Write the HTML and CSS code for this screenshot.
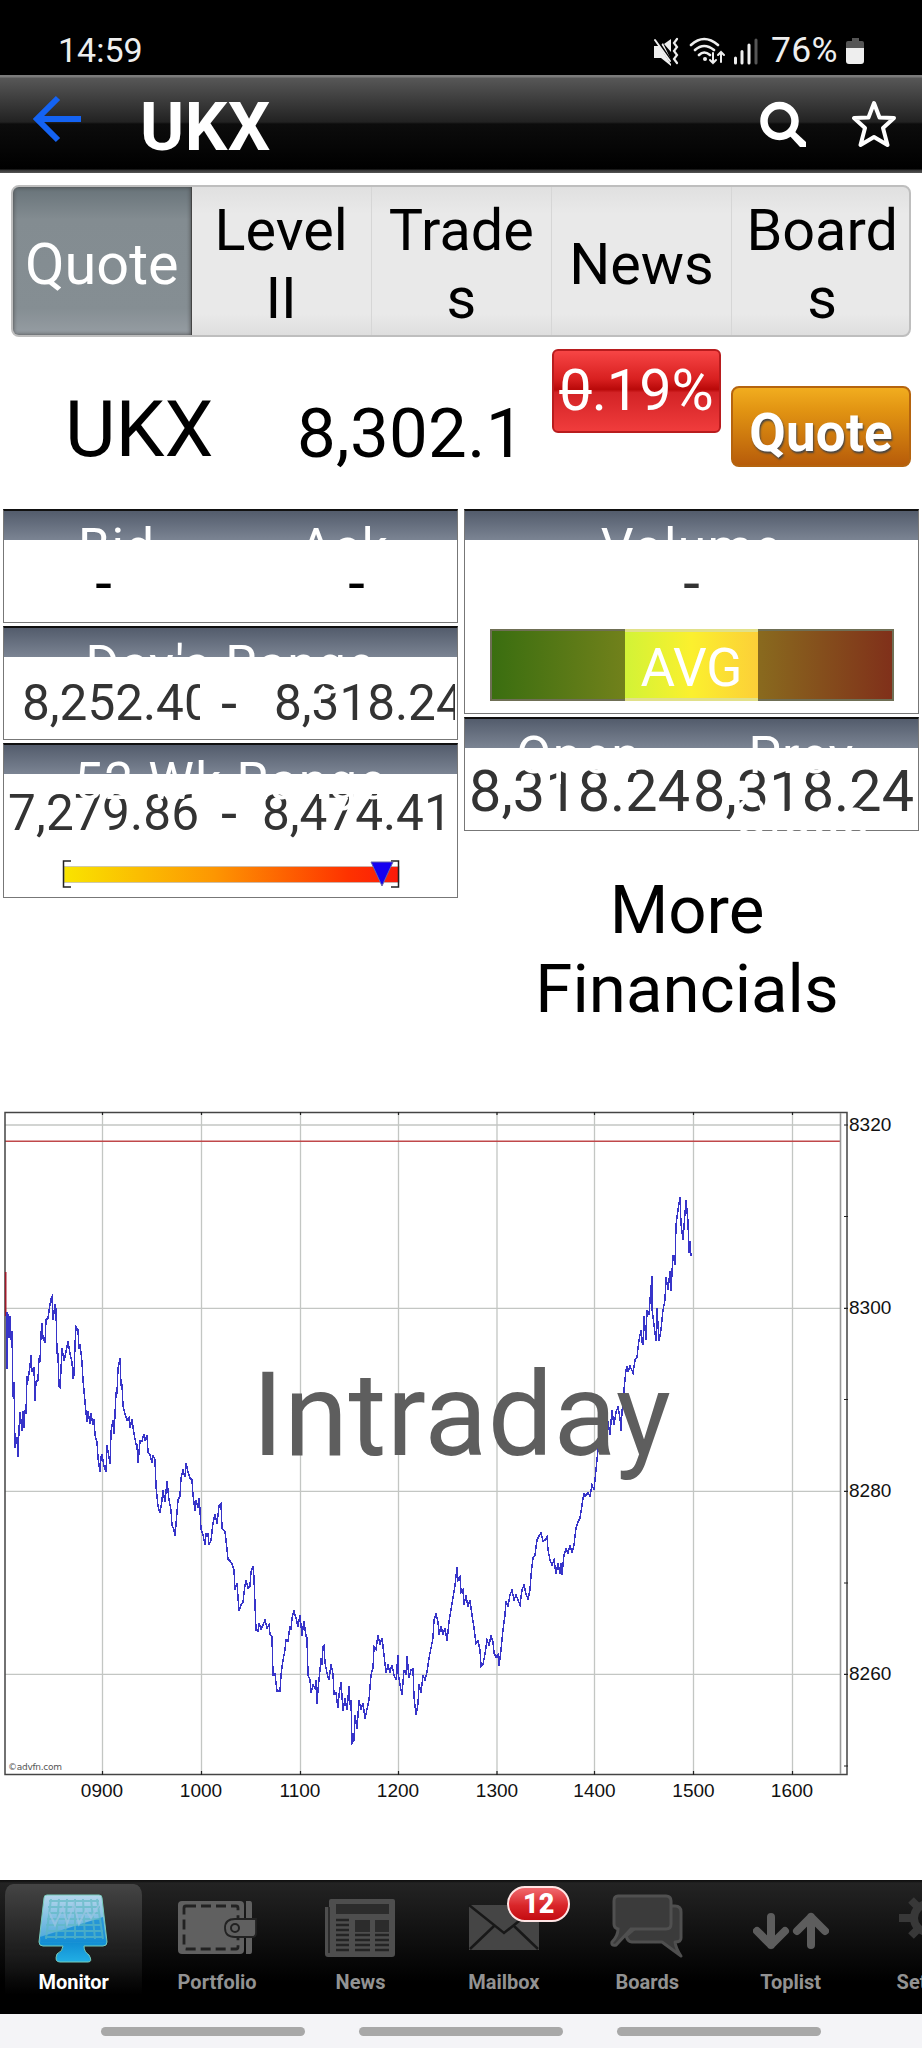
FILE: index.html
```html
<!DOCTYPE html>
<html lang="en">
<head>
<meta charset="utf-8">
<title>UKX</title>
<link rel="stylesheet" href="styles.css">
</head>
<body>
<div class="status">
  <span class="clock">14:59</span>
  <svg class="status-icons" width="120" height="32" viewBox="0 0 120 32">
    <g fill="#eee"><path d="M1 10h6l3-3 8 17v6L8 22H1z"/><path d="M18 3v13l-7-8z"/></g>
    <g fill="none" stroke="#eee" stroke-linecap="round">
      <path d="M3 3l16 24" stroke="#000" stroke-width="3"/><path d="M2 4l15 21" stroke-width="2"/>
      <path d="M24 3l-3 4 3 4-3 4 3 4-3 4 3 4" stroke-width="2.2"/>
      <path d="M38 9q13-12 27 0M42 14q9-8 19 0M46 19q5-5 11 0" stroke-width="2.6"/>
      <path d="M60 17v10m-3-3l3 3 3-3M68 26V16m-3 3l3-3 3 3" stroke-width="2"/>
    </g>
    <circle cx="52" cy="23" r="2" fill="#eee"/>
    <path d="M82.500 22v5M89 15.500v11.500M96 9v18" stroke="#eee" stroke-width="3" stroke-linecap="round"/>
    <path d="M103 4v23" stroke="#555" stroke-width="3" stroke-linecap="round"/>
  </svg>
  <span class="percent">76%</span>
  <svg class="battery" width="18" height="28" viewBox="0 0 18 28">
    <path d="M6 0h7v3h3q2 0 2 2v6H0V5q0-2 2-2h4z" fill="#555"/><path d="M0 10h18v13q0 3-3 3H3q-3 0-3-3z" fill="#eee"/>
  </svg>
</div>
<header class="titlebar">
  <svg class="back" width="50" height="52" viewBox="0 0 50 52"><path d="M26 4L5 25l21 21M5 25h44" fill="none" stroke="#1463f3" stroke-width="6"/></svg>
  <h1>UKX</h1>
  <svg width="46" height="48" viewBox="0 0 46 48"><circle cx="19.500" cy="20" r="15.500" fill="none" stroke="#fff" stroke-width="7.500"/><path d="M28 33l5-4 13 12v5h-6z" fill="#fff"/></svg>
  <svg class="star" width="44" height="48" viewBox="0 0 44 48"><path d="M22 3l5.500 14.500L42 18 31 28l4.500 17L22 37 8.500 45 13 28 2 18l14.500-.5z" fill="none" stroke="#fff" stroke-width="4" stroke-linejoin="round"/></svg>
</header>
<nav class="tabs">
  <div class="tab tab-on">Quote</div><div class="tab">Level<br>II</div><div class="tab">Trade<br>s</div><div class="tab">News</div><div class="tab">Board<br>s</div>
</nav>
<section class="summary">
  <div class="symbol">UKX</div>
  <div class="price">8,302.1</div>
  <div class="change"><span class="struck">0</span>.19%</div>
  <div class="quote-button">Quote</div>
</section>
<section class="panels">
  <div class="column">
    <div class="panel short">
      <div class="head"><span class="bid">Bid</span><span class="ask">Ask</span></div>
      <div class="values dashes"><span>-</span><span>-</span></div>
    </div>
    <div class="panel short">
      <div class="head"><span>Day's Range</span></div>
      <div class="values range day"><span class="low">8,252.40</span><span class="mid">-</span><span class="high">8,318.24</span></div>
    </div>
    <div class="panel year-panel">
      <div class="head"><span>52 Wk Range</span></div>
      <div class="values range year"><span class="low">7,279.86</span><span class="mid">-</span><span class="high">8,474.41</span></div>
      <svg class="gauge" width="340" height="30" viewBox="0 0 340 30">
        <defs><linearGradient id="heat"><stop offset="0" stop-color="#f9e400"/><stop offset=".45" stop-color="#fd9602"/><stop offset=".85" stop-color="#fe3200"/><stop offset="1" stop-color="#fc1a09"/></linearGradient></defs>
        <rect x="2" y="7.500" width="335" height="16" fill="url(#heat)" stroke="#bbb" stroke-width=".7"/>
        <path d="M9 2H1.500v26H9M329 2h7.500v26H329" fill="none" stroke="#222" stroke-width="1.500"/>
        <path d="M309 3h22l-11 24z" fill="#1500f0" stroke="#66a" stroke-width="1"/>
      </svg>
    </div>
  </div>
  <div class="column">
    <div class="panel volume">
      <div class="head"><span>Volume</span></div>
      <div class="values single"><span>-</span></div>
      <div class="average"><div></div><div class="avg">AVG</div><div></div></div>
    </div>
    <div class="panel short">
      <div class="head two-line"><span class="open">Open</span><span class="prev">Prev<br>Close</span></div>
      <div class="values opening"><span>8,318.24</span><span>8,318.24</span></div>
    </div>
    <div class="more">More<br>Financials</div>
  </div>
</section>
<svg class="chart" width="922" height="720" viewBox="0 1100 922 720">
  <path d="M102.500 1113V1774M201.500 1113V1774M300.500 1113V1774M398.500 1113V1774M497 1113V1774M594.500 1113V1774M693.500 1113V1774M792.500 1113V1774M5 1125H840M5 1308.300H840M5 1491.300H840M5 1674.300H840" stroke="#c3c6c3" stroke-width="1.300"/>
  <path d="M5 1141.300H840" stroke="#c0484a" stroke-width="1.500"/>
  <path d="M5 1112.600H847V1774.400H5Z" fill="none" stroke="#444" stroke-width="1.500"/>
  <path d="M840.500 1113V1774" stroke="#999" stroke-width="1.600"/>
  <path d="M844 1125h4M844 1216.500h4M844 1308.300h4M844 1399.500h4M844 1491.300h4M844 1583h4M844 1674.300h4M844 1766h4M102.500 1771v4M201.500 1771v4M300.500 1771v4M398.500 1771v4M497 1771v4M594.500 1771v4M693.500 1771v4M792.500 1771v4M102.500 1112v3M201.500 1112v3M300.500 1112v3M398.500 1112v3M497 1112v3M594.500 1112v3M693.500 1112v3M792.500 1112v3" stroke="#222" stroke-width="1.200"/>
  <path d="M5.700 1272V1316" stroke="#a01a2a" stroke-width="1.600"/>
  <polyline class="trace" points="7,1312 7,1369 8,1314 9,1338 10,1316 11,1340 12,1331 13,1397 14,1382 15,1448 17,1437 18,1457 19,1430 20,1412 22,1431 23,1411 24,1428 25,1410 26,1414 27,1376 28,1381 30,1366 31,1355 32,1372 34,1367 35,1401 36,1382 38,1380 39,1358 40,1362 41,1334 42,1323 43,1338 45,1343 46,1320 48,1318 49,1311 51,1299 52,1297 53,1320 55,1304 56,1309 57,1353 58,1354 59,1386 60,1387 61,1370 62,1348 64,1361 66,1352 68,1341 70,1354 72,1362 73,1379 74,1375 75,1345 76,1327 78,1330 79,1349 80,1344 82,1362 83,1380 85,1402 87,1422 88,1411 90,1424 91,1413 93,1425 94,1419 95,1435 97,1442 98,1458 100,1472 101,1457 102,1454 104,1466 106,1472 107,1445 109,1457 110,1464 111,1432 113,1420 114,1434 115,1415 116,1393 117,1393 118,1368 120,1358 121,1385 122,1385 123,1406 125,1414 127,1420 129,1418 130,1428 132,1419 134,1434 136,1444 137,1445 138,1463 140,1441 142,1441 144,1434 145,1441 147,1435 148,1452 150,1455 152,1463 153,1455 155,1460 156,1486 158,1506 160,1513 162,1500 163,1490 165,1502 167,1481 169,1500 171,1510 172,1525 174,1530 175,1536 177,1512 178,1500 180,1496 181,1478 183,1470 185,1477 186,1463 188,1472 190,1478 192,1480 193,1495 195,1511 196,1500 198,1508 199,1498 200,1510 201,1529 203,1535 205,1545 206,1534 208,1534 209,1545 211,1540 213,1523 215,1514 217,1524 219,1506 221,1504 222,1528 225,1532 226,1540 228,1559 230,1561 232,1564 234,1570 235,1590 237,1583 239,1611 241,1605 243,1602 245,1585 246,1580 248,1588 250,1586 251,1572 253,1566 254,1578 255,1605 256,1630 258,1631 259,1623 261,1629 263,1625 265,1620 267,1628 269,1625 270,1634 272,1637 273,1675 275,1674 277,1691 280,1691 281,1675 283,1660 285,1650 286,1640 288,1641 290,1626 291,1630 292,1618 294,1611 296,1618 298,1627 300,1615 302,1636 304,1621 306,1636 307,1638 308,1675 310,1680 311,1693 313,1685 315,1688 316,1680 317,1704 318,1690 320,1670 321,1658 322,1665 323,1647 324,1646 325,1663 327,1673 329,1680 331,1664 333,1674 334,1694 336,1693 338,1708 339,1695 341,1682 343,1711 345,1698 347,1710 349,1686 350,1705 351,1700 352,1743 354,1740 355,1715 357,1729 359,1700 361,1710 363,1703 365,1719 367,1709 369,1700 371,1675 373,1668 374,1647 376,1649 378,1635 380,1645 382,1638 384,1655 386,1673 388,1665 390,1672 392,1665 394,1675 396,1680 398,1655 398,1672 400,1685 402,1695 404,1670 406,1675 407,1656 409,1678 411,1670 413,1669 414,1697 416,1715 418,1704 419,1684 421,1693 423,1675 425,1680 427,1672 429,1658 431,1648 433,1638 434,1620 436,1614 438,1622 439,1635 441,1626 443,1635 445,1628 447,1641 449,1622 451,1610 453,1598 455,1585 457,1567 458,1580 460,1577 461,1592 463,1590 464,1605 466,1595 468,1607 470,1600 472,1615 474,1628 476,1643 478,1641 480,1650 481,1666 483,1664 485,1654 487,1640 489,1645 491,1636 493,1642 494,1653 496,1657 498,1655 499,1666 501,1650 503,1630 505,1615 506,1601 508,1607 510,1595 512,1590 514,1600 516,1595 518,1600 520,1605 522,1590 524,1585 526,1594 528,1599 530,1590 531,1575 533,1558 535,1555 537,1540 539,1536 541,1533 543,1541 545,1540 547,1537 548,1550 550,1560 552,1565 554,1560 556,1574 558,1563 560,1574 561,1563 562,1575 564,1555 566,1549 568,1553 570,1545 572,1553 574,1545 576,1528 578,1522 580,1518 582,1505 584,1493 585,1496 588,1493 590,1496 592,1485 594,1490 596,1470 598,1450 600,1430 604,1405 608,1422 610,1435 612,1410 614,1425 616,1412 618,1407 620,1418 621,1431 622,1412 624,1390 626,1370 627,1366 628,1372 630,1366 633,1373 635,1360 637,1357 639,1340 641,1330 642,1342 643,1345 644,1316 646,1340 647,1310 649,1315 650,1300 652,1276 652,1309 654,1325 656,1341 657,1308 659,1341 661,1330 663,1310 665,1300 666,1277 668,1290 670,1271 671,1291 673,1255 675,1265 676,1225 678,1210 680,1197 681,1224 683,1240 685,1213 686,1200 688,1222 689,1253 690,1241 691,1256"/>
  <g class="axis">
    <text x="849" y="1131">8320</text><text x="849" y="1314">8300</text><text x="849" y="1497">8280</text><text x="849" y="1680">8260</text>
    <g text-anchor="middle"><text x="102" y="1797">0900</text><text x="201" y="1797">1000</text><text x="300" y="1797">1100</text><text x="398" y="1797">1200</text><text x="497" y="1797">1300</text><text x="594.500" y="1797">1400</text><text x="693.500" y="1797">1500</text><text x="792" y="1797">1600</text></g>
  </g>
  <text class="credit" x="8" y="1770" textLength="54">©advfn.com</text>
  <text class="watermark" x="252" y="1454.500" textLength="419">Intraday</text>
</svg>
<nav class="dock">
  <div class="item item-on">
    <svg width="72" height="74" viewBox="0 0 72 74"><defs><linearGradient id="glass" x2="0" y2="1"><stop offset="0" stop-color="#b5d6ec"/><stop offset=".6" stop-color="#58aedc"/><stop offset=".72" stop-color="#128fd4"/><stop offset="1" stop-color="#22afe4"/></linearGradient></defs>
      <path d="M9 3h52q3 0 3 3l5 44q0 4-4 4H46q0 6 5 9 4 7-1 7H22q-6 0-3-8 6-3 6-8H5q-4 0-4-4L6 6q0-3 3-3z" fill="url(#glass)" stroke="#7cb" stroke-width="1"/>
      <path d="M2 45L65 25l3 25H3z" fill="#128cd4" opacity=".8"/>
      <path d="M11 9h50M10 15h52M10 21h52M9 27h54M8 33h56M8 39h57M7 45h58M13 7L8 47M21 7l-3 40M29 7l-2 40M37 7v40M45 7l2 40M53 7l4 40M59 7l6 40" stroke="#5eb9c2" stroke-width="2" opacity=".65"/><path d="M11 20l6 13 8-18 4 17 7-20 5 20 7-14 5 8 8-13" fill="none" stroke="#9cc4e4" stroke-width="2" opacity=".7"/></svg>
    <span>Monitor</span></div>
  <div class="item">
    <svg width="80" height="74" viewBox="0 0 80 74"><rect x="1" y="9" width="66" height="53" rx="4" fill="#606060"/><path d="M69 9h4q2 0 2 3v47q0 3-2 3h-4z" fill="#606060"/><rect x="7" y="14" width="54" height="43" rx="2" fill="none" stroke="#222" stroke-width="2.800" stroke-dasharray="10 5"/><path d="M79 27H58q-10 0-10 9t10 9h17q4 0 4-4z" fill="#606060" stroke="#222" stroke-width="1.800"/><circle cx="58" cy="36" r="4" fill="none" stroke="#222" stroke-width="2"/></svg>
    <span>Portfolio</span></div>
  <div class="item">
    <svg width="72" height="74" viewBox="0 0 72 74"><path d="M7 7h62q2 0 2 2v53q0 3-3 3H4q-3 0-3-3V15h4V9q0-2 2-2z" fill="#4e4e4e"/><path d="M5 15v46" stroke="#222" stroke-width="1.500"/><path d="M12 12h53v10H12zM31 28h15v12H31zM51 28h14v12H51z" fill="#2c2c2c"/><path d="M12 28h13M12 33h13M12 38h13M12 43h13M12 48h13M12 53h13M12 58h13M31 43h15M31 48h15M31 53h15M31 58h15M51 43h14M51 48h14M51 53h14M51 58h14" stroke="#242424" stroke-width="2.500"/></svg>
    <span>News</span></div>
  <div class="item mail">
    <svg width="72" height="74" viewBox="0 0 72 74"><path d="M1 13h70v45H1z" fill="#454545"/><path d="M1 13l35 28 35-28M2 57l24-23M70 57L46 34" fill="none" stroke="#181818" stroke-width="2.500"/></svg>
    <b class="badge">12</b><span>Mailbox</span></div>
  <div class="item">
    <svg width="74" height="74" viewBox="0 0 74 74"><path d="M56 14h9q6 0 6 6v26q0 4-6 4 1 7 6 14L52 50H22q-4 0-6-6l8-7z" fill="#3b3b3b" stroke="#4f4f4f" stroke-width="3" stroke-linejoin="round"/><path d="M8 4h48q5 0 5 5v23q0 5-5 5H21L6 53q-5 1-4-3 6-6 6-13-4-1-4-5V9q0-5 4-5z" fill="#3b3b3b" stroke="#505050" stroke-width="3"/></svg>
    <span>Boards</span></div>
  <div class="item">
    <svg width="76" height="74" viewBox="0 0 76 74" fill="none" stroke="#5d5d5d" stroke-width="8" stroke-linecap="round" stroke-linejoin="round"><path d="M18 25v28M4 39l14 14 14-14M58 53V25M44 39l14-14 14 14"/></svg>
    <span>Toplist</span></div>
  <div class="item">
    <svg width="72" height="74" viewBox="0 0 72 74"><circle cx="30" cy="26" r="14" fill="none" stroke="#383838" stroke-width="8"/><path d="M14 26H1M20 15l-7-7M20 37l-7 7M30 11V2M30 41v9M40 37l7 7M40 15l7-7M46 26h13" stroke="#383838" stroke-width="8"/></svg>
    <span>Settings</span></div>
</nav>
<div class="gestures"><i></i><i></i><i></i></div>
</body>
</html>
```
FILE: styles.css
```css
* { box-sizing: border-box; }
html, body { margin: 0; width: 922px; height: 2048px; overflow: hidden; }
body { background: #fff; color: #000; font-family: Roboto, "Liberation Sans", sans-serif; display: flex; flex-direction: column; }
svg { display: block; flex: none; }
.status { height: 75px; flex: none; background: #000; color: #eee; display: flex; align-items: flex-start; padding: 29px 58px 0 58px; font-size: 34px; line-height: 42px; }
.clock { flex: 1; }
.status-icons { margin-top: 7px; }
.percent { width: 75px; margin-left: -2px; font-size: 35.500px; letter-spacing: .3px; }
.battery { margin-top: 9px; }
.titlebar { height: 98px; flex: none; display: flex; align-items: flex-start; background: linear-gradient(#7b7b7b 0 2px, #575757 3px, #222 47px, #0c0c0c 49px, #000 94px, #333 95px, #555 98px); color: #fff; padding-right: 26px; }
.back { margin: 19px 0 0 32px; }
h1 { margin: 12px 0 0 58px; font-size: 67px; line-height: 80px; font-weight: 700; flex: 1; letter-spacing: .5px; }
.titlebar > svg:nth-of-type(2) { margin-top: 26px; }
.titlebar .star { margin: 25px 0 0 46px; }
.tabs { height: 152px; flex: none; margin: 12px 11px 0; display: flex; border: 2px solid #bebebe; border-radius: 8px; overflow: hidden; background: linear-gradient(#e0e0e0, #e9e9e9 18%, #e9e9e9 86%, #dedede); font-size: 57.600px; line-height: 67.500px; text-align: center; }
.tab { width: 180.200px; flex: none; display: flex; align-items: center; justify-content: center; border-right: 1px solid #d6d6d6; padding-top: 7px; }
.tab:last-child { border-right: 0; }
.tab-on { width: 178.500px; background: linear-gradient(#687379, #838c91 22%, #858e93 82%, #969da3); color: #fff; box-shadow: inset 0 0 4px #444; border-right-color: #444; }
.summary { height: 172px; flex: none; display: flex; align-items: flex-start; }
.symbol { width: 300px; padding: 48px 0 0 65px; font-size: 78px; line-height: 90px; }
.price { width: 252px; padding: 52px 0 0; margin-left: -3px; font-size: 69px; line-height: 89px; letter-spacing: .3px; }
.change { width: 169px; height: 84px; margin: 12px 0 0 3px; border: 2px solid #b81c1e; border-radius: 6px; color: #fff; background: linear-gradient(#f74545, #d82020 35%, #b90909 48%, #d32326 52%, #f03c3c); font-size: 57.600px; line-height: 80px; text-align: center; white-space: nowrap; }
.struck { text-decoration: line-through; text-decoration-thickness: 4px; }
.quote-button { width: 180px; height: 81px; margin: 49px 0 0 10px; border: 2px solid #b5640e; border-radius: 8px; color: #fff; background: linear-gradient(#f1ad1f, #e19312 30%, #b75c0a); font-size: 53px; line-height: 91px; font-weight: 700; text-align: center; text-shadow: 1px 2px 2px #444; letter-spacing: .2px; }
.panels { height: 591px; flex: none; display: flex; gap: 6px; padding: 0 3px; }
.column { width: 455px; flex: none; display: flex; flex-direction: column; gap: 3px; }
.panel { flex: none; border: 1.500px solid #777; border-top: 2px solid #111; }
.short { height: 114px; }
.year-panel { height: 155px; }
.volume { height: 205px; }
.head { position: relative; z-index: 1; height: 29px; background: linear-gradient(#535c6c, #7b8493); color: #fff; font-size: 51.500px; line-height: 73px; display: flex; justify-content: space-around; text-align: center; white-space: nowrap; letter-spacing: 1.200px; }
.head span { flex: 1; }
.two-line { line-height: 62px; padding-top: 6px; }
.open { padding-left: 2px; }
.prev { padding-right: 5px; }
.values { height: 79px; display: flex; color: #333; font-size: 57.500px; white-space: nowrap; }
.dashes, .single { font-size: 60px; line-height: 87px; text-align: center; }
.dashes { color: #000; }
.dashes span { width: 199px; }
.dashes span + span { margin-left: 54px; }
.bid { padding-right: 2px; }
.single span { flex: 1; }
.range { font-size: 49.500px; line-height: 93px; }
.low { width: 214px; }
.mid { width: 36px; font-size: 58px; }
.day .low { margin-left: 18px; width: 178px; margin-right: 21px; overflow: hidden; flex: none; }
.day .mid { flex: none; }
.day .high { overflow: hidden; margin: 0 2px 0 17px; flex: 1; }
.year .low { margin-left: 4px; width: 213px; letter-spacing: .2px; }
.year .high { margin-left: 5px; }
.year { line-height: 92px; margin-top: -7px; height: 86px; }
.gauge { margin-left: 58px; margin-top: 6px; }
.average { width: 404px; height: 72px; margin: 10px auto 0; display: flex; border: 2px solid #6f6f55; background: linear-gradient(90deg, #3a6e10, #71811b 33%, #71811b 33.300%, #896a1e 66.700%, #80301a); color: #fff; font-size: 53px; line-height: 74px; text-align: center; }
.average div { flex: 1; }
.average .avg { margin: -2px 0; border: solid #e1e08a; border-width: 3px 0; background: linear-gradient(90deg, #d2f336, #fbf02e 50%, #fccf38); line-height: 72px; }
.opening { line-height: 87px; padding-left: 4px; }
.opening span { width: 224px; letter-spacing: .1px; }
.more { padding: 37px 9px 0 0; font-size: 67.200px; line-height: 78.500px; text-align: center; }
.trace { fill: none; stroke: #3734c9; stroke-width: 1.500; shape-rendering: crispEdges; }
.axis { font: 19px "Liberation Sans", Arial, sans-serif; fill: #111; }
.credit { font: 9px "DejaVu Sans", sans-serif; fill: #555; }
.watermark { font-size: 116px; fill: #5e5e5e; }
.dock { height: 134px; flex: none; margin-top: 60px; padding: 4px 0 0 2px; display: flex; overflow: hidden; background: linear-gradient(#111 0 1px, #232323 3px, #000 76%); }
.item { position: relative; width: 143.400px; flex: none; display: flex; flex-direction: column; align-items: center; padding-top: 8px; color: #929292; font-size: 20px; line-height: 24px; font-weight: 700; }
.item span { margin-top: 4px; }
.item-on { color: #fff; border-radius: 11px 11px 0 0; background: linear-gradient(#444, #222 45%, transparent 85%) padding-box; border: solid transparent; border-width: 0 3px; }
.badge { position: absolute; left: 75px; top: 2px; width: 63px; height: 36px; border: 2px solid #ffe5e5; border-radius: 18px; background: linear-gradient(#f16a6f, #d92529 55%, #c30c11); color: #fff; font-size: 27px; line-height: 33px; text-align: center; }
.gestures { height: 34px; flex: none; background: #f4f4f7; display: flex; gap: 54px; padding: 13px 0 0 101px; }
.gestures i { width: 204px; height: 9px; border-radius: 5px; background: #a8a8a8; }
```
